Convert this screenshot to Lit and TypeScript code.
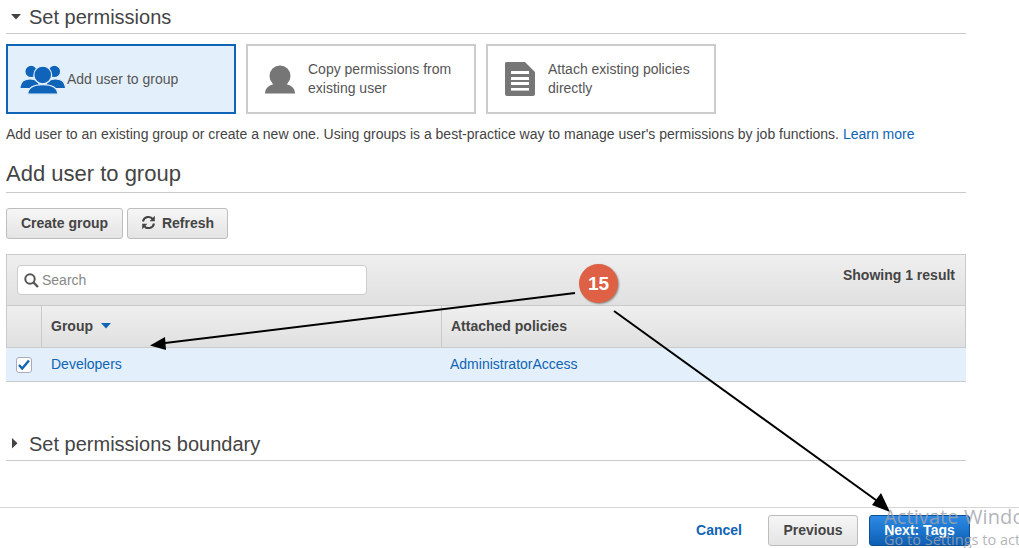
import { LitElement, html, css, svg } from "lit";
import { customElement } from "lit/decorators.js";

const groupIcon = svg`<g fill="#0f64b9" stroke="#e3f0fc" stroke-width="1.2">
  <circle cx="11" cy="7" r="6.2"/><circle cx="34" cy="7" r="6.2"/>
  <path d="M0 22 C1 16 5 14.5 10 14.5 C15 14.5 19 16 20 22 L20 24 H0Z"/>
  <path d="M25 22 C26 16 30 14.5 35 14.5 C40 14.5 44 16 45 22 L45 24 H25Z"/>
  <circle cx="22.5" cy="10.5" r="8.8"/>
  <path d="M7.5 29.5 C8 22.5 14 20 22.5 20 C31 20 37 22.5 37.5 29.5Z"/></g>`;
const userIcon = svg`<circle cx="15" cy="11" r="10.5" fill="#767676"/>
  <path d="M0 28 C0.5 22 5 20 11 18.5 H19 C25 20 29.5 22 30 28 V28.5 H0Z" fill="#767676"/>`;
const docIcon = svg`<path d="M1.5 0 H20 L30 10 V32 a2 2 0 0 1 -2 2 H2 a2 2 0 0 1 -2 -2 V1.5 A1.5 1.5 0 0 1 1.5 0Z" fill="#767676"/>
  <g fill="#fff"><rect x="6" y="9" width="18" height="3"/><rect x="6" y="15" width="18" height="3"/><rect x="6" y="20" width="18" height="3"/><rect x="6" y="26" width="18" height="2.6"/></g>`;

@customElement("app-root")
export class AppRoot extends LitElement {
  static styles = css`
    :host { display: block; position: relative; width: 1019px; height: 548px; overflow: hidden; background: #fff;
      font-family: "Liberation Sans", Arial, sans-serif; color: #444; font-size: 14px; }
    .main { width: 960px; margin-left: 6px; display: flex; flex-direction: column; }
    .section { display: flex; align-items: center; height: 33px; border-bottom: 1px solid #cacaca; font-size: 20px; color: #444; line-height: 24px; }
    .caret { width: 23px; display: flex; padding-left: 5px; box-sizing: border-box; }
    .tri { margin-left: 1px; }
    .cards { display: flex; gap: 10px; margin-top: 10px; }
    .card { width: 230px; height: 70px; box-sizing: border-box; border: 2px solid #ccc; display: flex; align-items: center; line-height: 19px; color: #555; }
    .card.on { border-color: #0f64b5; background: #e3f0fc; }
    .card svg { flex: none; }
    .card .i1 { margin-left: 12px; margin-right: 1px; }
    .card .i2 { margin-left: 17px; margin-right: 13px; }
    .card .i3 { margin-left: 17px; margin-right: 13px; }
    .desc { margin-top: 10px; line-height: 20px; color: #444; height: 20px; white-space: nowrap; }
    a { color: #0f64b5; text-decoration: none; }
    .h2 { margin-top: 10px; height: 38px; border-bottom: 1px solid #cacaca; font-size: 22px; line-height: 40px; display: block; }
    .btns { display: flex; gap: 4px; margin-top: 15px; }
    .btn { box-sizing: border-box; height: 31px; padding-bottom: 2px; border: 1px solid #bdbdbd; border-radius: 3px; background: linear-gradient(#f6f6f6, #e4e4e4);
      font-weight: 700; font-size: 14px; color: #444; display: flex; align-items: center; justify-content: center; gap: 6px; }
    .b1 { width: 117px; } .b2 { width: 101px; }
    .table { margin-top: 15px; box-sizing: border-box; border-top: 1px solid #cacaca; border-right: 1px solid #cacaca; }
    .tb { height: 51px; background: linear-gradient(#efefef, #e0e0e0); border-left: 1px solid #cacaca; display: flex; justify-content: space-between; padding: 10px 10px 0 10px; box-sizing: border-box; border-bottom: 1px solid #cacaca; }
    .search { width: 350px; height: 30px; box-sizing: border-box; background: #fff; border: 1px solid #ccc; border-radius: 4px; display: flex; align-items: center; padding-left: 6px; gap: 3px; color: #888; }
    .count { font-weight: 700; font-size: 14px; color: #444; line-height: 20px; }
    .hd { height: 42px; display: grid; grid-template-columns: 34px 400px 1fr; background: linear-gradient(#efefef, #e0e0e0); box-sizing: border-box; border-bottom: 1px solid #cacaca; border-left: 1px solid #cacaca; }
    .hd > div { display: flex; align-items: center; font-weight: 700; padding: 0 0 2px 9px; gap: 8px; color: #444; box-sizing: border-box; border-left: 1px solid #cacaca; }
    .hd > div:first-child { border-left: 0; }
    .rowwrap { border-bottom: 1px solid #cacaca; margin-right: -1px; }
    .row { height: 33px; display: grid; grid-template-columns: 36px 399px 1fr; background: #e3f0fc; box-sizing: border-box; align-items: center; }
    .row > div { padding: 0 0 1px 9px; }
    .row .c { padding: 0 0 0 8px; }
    .chk { width: 16px; height: 16px; box-sizing: border-box; border: 1px solid #aab; border-radius: 3px; background: #fff; margin-left: 2px; display: flex; align-items: center; justify-content: center; }
    .sec2 { margin-top: 47px; padding-bottom: 2px; box-sizing: content-box; height: 29px; }
    .footer { position: absolute; left: 0; right: 0; top: 507px; height: 41px; border-top: 1px solid #d5d5d5; display: flex; justify-content: flex-end; align-items: flex-start; padding: 7px 49px 0 0; box-sizing: border-box; gap: 11px; }
    .footer .btn { padding-bottom: 1px; }
    .cancel { font-weight: 700; color: #0f64b5; line-height: 31px; margin-right: 15px; }
    .prev { width: 90px; }
    .next { width: 101px; background: linear-gradient(#2d8ae6, #0d5fb3); border-color: #0b4f96; }
    .footer .next { color: #fff; }
    .overlay { position: absolute; inset: 0; pointer-events: none; }
    .badge { position: absolute; left: 579px; top: 264px; width: 39px; height: 39px; border-radius: 50%; background: #de6145; color: #fff; font-weight: 700; font-size: 19px; display: flex; align-items: center; justify-content: center; box-shadow: 1px 1px 2px rgba(0,0,0,.4); }
    .wm { position: absolute; left: 884px; color: rgba(160,163,170,.82); white-space: nowrap; pointer-events: none; font-family: "Open Sans", "Liberation Sans", sans-serif; }
    .wm1 { top: 505px; font-size: 20px; line-height: 24px; letter-spacing: .1px; }
    .wm2 { top: 531px; font-size: 14.5px; line-height: 18px; }
  `;

  render() {
    return html`
      <div class="main">
        <div class="section"><span class="caret"><svg width="10" height="6"><path d="M0 0H10L5 5.5Z" fill="#444"/></svg></span><span>Set permissions</span></div>
        <div class="cards">
          <div class="card on"><svg class="i1" width="46" height="31" viewBox="0 0 45.5 30">${groupIcon}</svg><span>Add user to group</span></div>
          <div class="card"><svg class="i2" width="30" height="29" viewBox="0 0 30 29">${userIcon}</svg><span>Copy permissions from<br />existing user</span></div>
          <div class="card"><svg class="i3" width="30" height="34" viewBox="0 0 30 34">${docIcon}</svg><span>Attach existing policies<br />directly</span></div>
        </div>
        <div class="desc">Add user to an existing group or create a new one. Using groups is a best-practice way to manage user's permissions by job functions. <a>Learn more</a></div>
        <div class="h2">Add user to group</div>
        <div class="btns">
          <div class="btn b1">Create group</div>
          <div class="btn b2"><svg width="15" height="15" viewBox="0 0 15 15"><g fill="none" stroke="#444" stroke-width="2"><path d="M2 6.5 A5.6 5.6 0 0 1 12 4.2"/><path d="M13 8.5 A5.6 5.6 0 0 1 3 10.8"/></g><path d="M13.8 0.8V6.2H8.6Z M1.2 14.2V8.8H6.4Z" fill="#444"/></svg>Refresh</div>
        </div>
        <div class="table">
          <div class="tb">
            <div class="search"><svg width="15" height="15" viewBox="0 0 15 15"><circle cx="6" cy="6" r="4.7" fill="none" stroke="#555" stroke-width="2"/><path d="M9.5 9.5L14 14" stroke="#555" stroke-width="2.4"/></svg><span>Search</span></div>
            <div class="count">Showing 1 result</div>
          </div>
          <div class="hd"><div></div><div>Group <svg width="10" height="6"><path d="M0 0H10L5 5.5Z" fill="#0f64b5"/></svg></div><div>Attached policies</div></div>
          <div class="rowwrap"><div class="row">
            <div class="c"><span class="chk"><svg width="12" height="11" viewBox="0 0 12 11"><path d="M1 6L4.2 9.5L11 1.5" fill="none" stroke="#0f64b5" stroke-width="2.4"/></svg></span></div>
            <div><a>Developers</a></div>
            <div><a>AdministratorAccess</a></div>
          </div></div>
        </div>
        <div class="section sec2"><span class="caret"><svg width="6" height="11" class="tri"><path d="M0 0V10.5L5.5 5.2Z" fill="#444"/></svg></span><span>Set permissions boundary</span></div>
      </div>
      <div class="footer">
        <div class="cancel">Cancel</div>
        <div class="btn prev">Previous</div>
        <div class="btn next">Next: Tags</div>
      </div>
      <svg class="overlay" width="1019" height="548">
        <line x1="575" y1="293" x2="165" y2="343" stroke="#000" stroke-width="2"/>
        <path d="M150 345.5L165 337L166 350Z" fill="#000"/>
        <line x1="614" y1="311" x2="880" y2="503" stroke="#000" stroke-width="2"/>
        <path d="M890 512L872 505L881 493Z" fill="#000"/>
      </svg>
      <div class="badge">15</div>
      <div class="wm wm1">Activate Windo</div>
      <div class="wm wm2">Go to Settings to act</div>
    `;
  }
}
